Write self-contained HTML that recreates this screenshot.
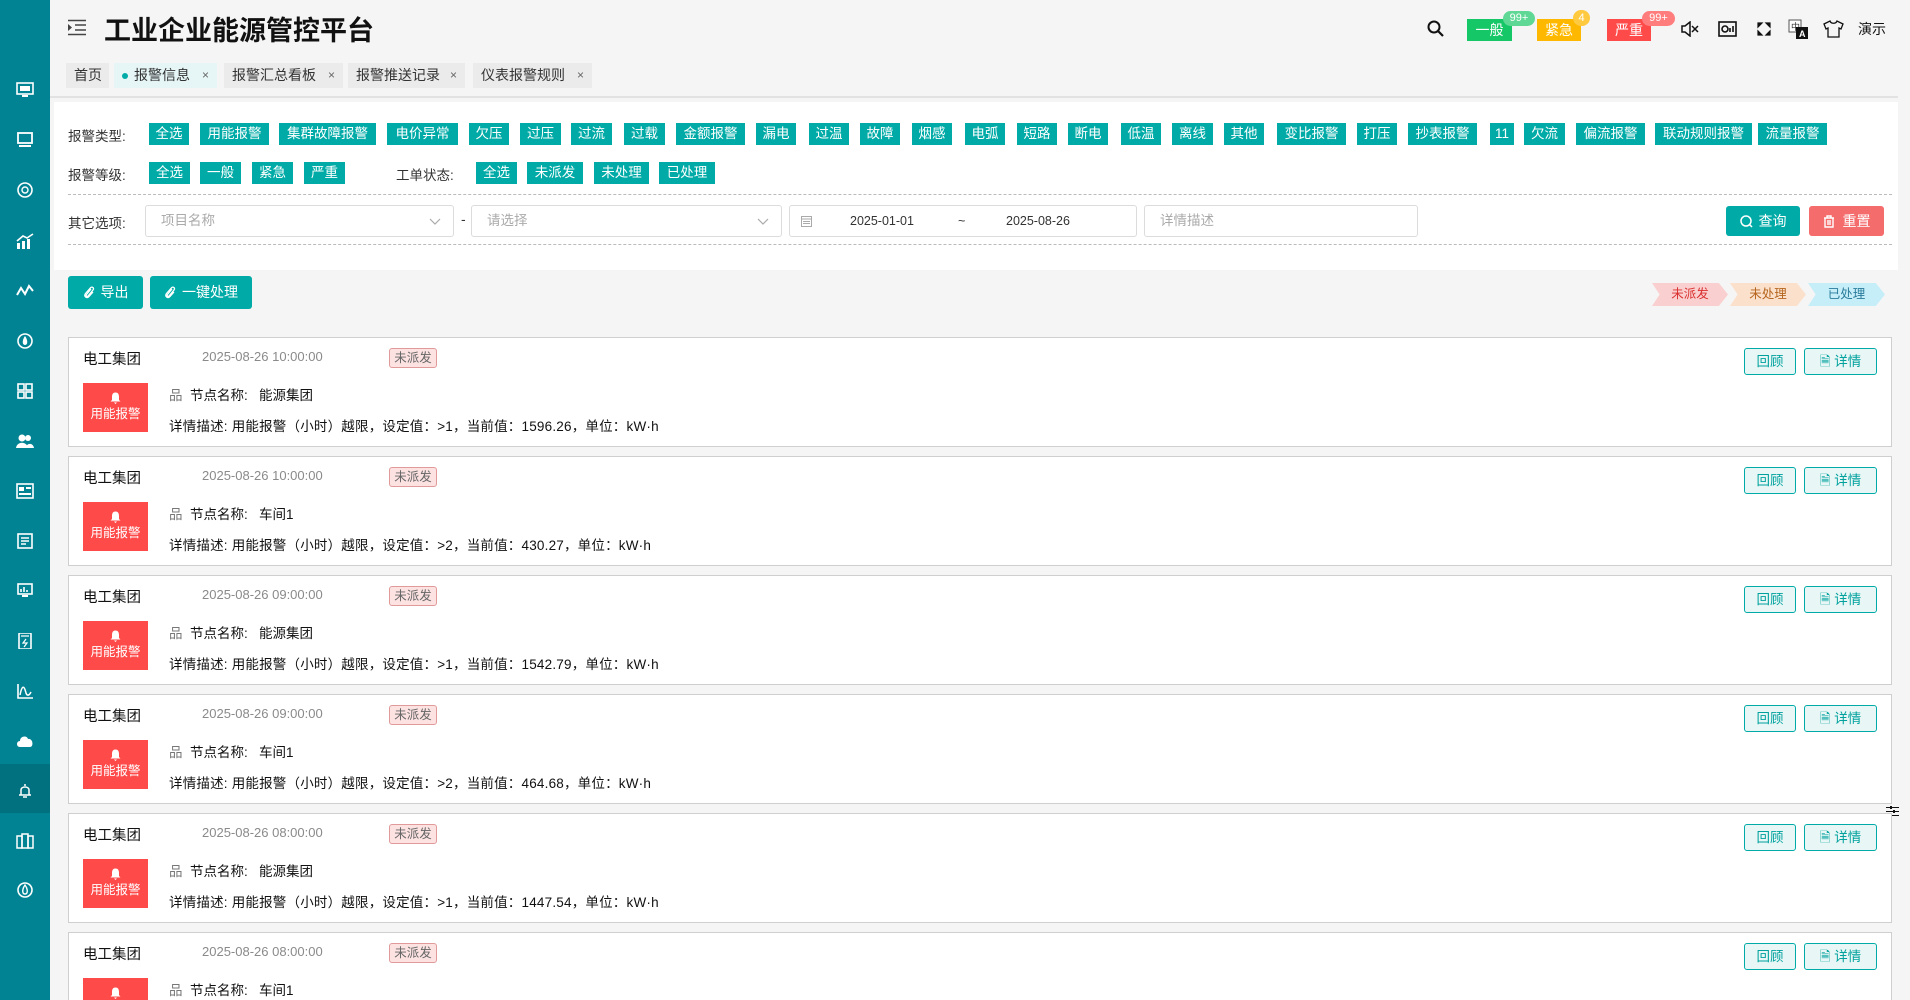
<!DOCTYPE html>
<html style="width:1910px;height:1000px;overflow:hidden"><head><meta charset="utf-8">
<style>
*{margin:0;padding:0;box-sizing:border-box}
body{width:1910px;height:1000px;overflow:hidden;background:#f5f5f5;font-family:"Liberation Sans","Noto Sans CJK SC",sans-serif;font-size:14px;color:#222;position:relative}
.abs{position:absolute}
.side{left:0;top:0;width:50px;height:1000px;background:#028393}
.side .act{position:absolute;left:0;top:764px;width:50px;height:49px;background:#01717f}
.si{position:absolute;left:16px;width:18px;height:16px}
.title{left:104px;top:9px;font-size:27px;font-weight:bold;color:#111}
.tab{top:63px;height:25px;line-height:25px;background:#ebebeb;font-size:14px;color:#333;padding-left:8px}
.tab .x{position:absolute;right:8px;top:0;font-size:12px;color:#666}
.panel{left:54px;top:102px;width:1844px;height:168px;background:#fff}
.lbl{font-size:13.5px;color:#333}
.tg{height:22px;line-height:22px;background:#00aba7;color:#fff;font-size:13.5px;text-align:center;white-space:nowrap}
.dash{left:68px;width:1824px;border-top:1px dashed #bbb;height:0}
.inp{top:205px;height:32px;border:1px solid #dcdcdc;border-radius:3px;background:#fff;color:#aaa;font-size:13.5px;line-height:30px;padding-left:15px}
.btn{color:#fff;font-size:14px;border-radius:3px;text-align:center}
.card{left:68px;width:1824px;height:110px;background:#fff;border:1px solid #cfcfcf;overflow:hidden}
.card .co{position:absolute;left:14px;top:10px;font-size:14.5px;color:#111}
.card .tm{position:absolute;left:133px;top:11px;font-size:13px;color:#8a8a8a}
.card .bd{position:absolute;left:320px;top:10px;width:48px;height:20px;border:1px solid #e09a9a;background:#fde2e2;border-radius:3px;color:#666;font-size:12.5px;line-height:18px;text-align:center}
.card .rb{position:absolute;left:14px;top:45px;width:65px;height:49px;background:#ff4a4a;color:#fff;font-size:12.5px;text-align:center}
.card .rb svg{display:block;margin:9px auto 1px}
.card .l1{position:absolute;left:100px;top:46px;font-size:13.5px;color:#111}
.card .l2{position:absolute;left:100px;top:77px;font-size:13.5px;color:#111;letter-spacing:0.2px}
.card .b1,.card .b2{position:absolute;top:10px;height:27px;border:1px solid #00aba7;background:#e8f7f6;color:#00a19d;border-radius:3px;font-size:13.5px;line-height:25px;text-align:center}
.card .b1{left:1675px;width:52px}
.card .b2{left:1735px;width:73px}
.arrow{top:283px;height:23px;line-height:23px;font-size:12.5px;text-align:center;clip-path:polygon(0 0,88% 0,100% 50%,88% 100%,0 100%,10% 50%)}
</style></head><body>

<div class="abs side">
<div class="act"></div>
<svg class="si" style="top:82px" viewBox="0 0 18 16"><rect x="1" y="1" width="16" height="11" fill="none" stroke="#fff" stroke-width="1.6"/><rect x="4" y="4" width="10" height="5" fill="#fff"/><rect x="6" y="13" width="6" height="2" fill="#fff"/></svg>
<svg class="si" style="top:132px" viewBox="0 0 18 16"><rect x="2" y="1" width="14" height="10" fill="none" stroke="#fff" stroke-width="1.8"/><rect x="3" y="13" width="12" height="2" fill="#fff"/></svg>
<svg class="si" style="top:182px" viewBox="0 0 18 16"><circle cx="9" cy="8" r="7" fill="none" stroke="#fff" stroke-width="1.6"/><circle cx="9" cy="8" r="3" fill="none" stroke="#fff" stroke-width="1.4"/></svg>
<svg class="si" style="top:233px" viewBox="0 0 18 16"><rect x="1" y="10" width="3" height="6" fill="#fff"/><rect x="6" y="8" width="3" height="8" fill="#fff"/><rect x="11" y="6" width="3" height="10" fill="#fff"/><path d="M1 8 L7 3 L11 5 L17 1" stroke="#fff" stroke-width="1.6" fill="none"/></svg>
<svg class="si" style="top:283px" viewBox="0 0 18 16"><path d="M1 12 L5 5 L9 11 L13 3 L17 8" stroke="#fff" stroke-width="2" fill="none"/></svg>
<svg class="si" style="top:333px" viewBox="0 0 18 16"><circle cx="9" cy="8" r="7" fill="none" stroke="#fff" stroke-width="1.6"/><path d="M9 3 C6 7 6 12 9 12 C12 12 12 7 9 3Z" fill="#fff"/></svg>
<svg class="si" style="top:383px" viewBox="0 0 18 16"><rect x="2" y="1" width="6" height="6" fill="none" stroke="#fff" stroke-width="1.6"/><rect x="10" y="1" width="6" height="6" fill="none" stroke="#fff" stroke-width="1.6"/><rect x="2" y="9" width="6" height="6" fill="none" stroke="#fff" stroke-width="1.6"/><rect x="10" y="9" width="6" height="6" fill="none" stroke="#fff" stroke-width="1.6"/></svg>
<svg class="si" style="top:433px" viewBox="0 0 18 16"><circle cx="6" cy="5" r="3.5" fill="#fff"/><circle cx="12" cy="5" r="3" fill="#fff"/><path d="M0 15 C1 8 11 8 12 15Z M10 15 C10 10 17 9 18 15Z" fill="#fff"/></svg>
<svg class="si" style="top:483px" viewBox="0 0 18 16"><rect x="1" y="1" width="16" height="14" fill="none" stroke="#fff" stroke-width="1.6"/><rect x="3" y="4" width="5" height="4" fill="#fff"/><rect x="10" y="4" width="5" height="2" fill="#fff"/><rect x="3" y="10" width="12" height="2" fill="#fff"/></svg>
<svg class="si" style="top:533px" viewBox="0 0 18 16"><rect x="2" y="1" width="14" height="14" fill="none" stroke="#fff" stroke-width="1.6"/><path d="M5 5H13M5 8H13M5 11H10" stroke="#fff" stroke-width="1.4"/></svg>
<svg class="si" style="top:583px" viewBox="0 0 18 16"><rect x="2" y="1" width="14" height="10" fill="none" stroke="#fff" stroke-width="1.6"/><path d="M5 9V6M8 9V4M11 9V7" stroke="#fff" stroke-width="1.6"/><rect x="6" y="12" width="6" height="2" fill="#fff"/></svg>
<svg class="si" style="top:633px" viewBox="0 0 18 16"><rect x="3" y="0" width="12" height="16" rx="1" fill="none" stroke="#fff" stroke-width="1.6"/><path d="M5 3H13M10 6L7 10H11L8 14" stroke="#fff" stroke-width="1.2" fill="none"/></svg>
<svg class="si" style="top:683px" viewBox="0 0 18 16"><path d="M2 1V15H17" stroke="#fff" stroke-width="1.6" fill="none"/><path d="M4 12 C6 2 8 2 10 10 C11 13 13 13 15 9" stroke="#fff" stroke-width="1.5" fill="none"/></svg>
<svg class="si" style="top:733px" viewBox="0 0 18 16"><path d="M4 14 C0 14 0 8 4 8 C4 3 11 2 12 6 C17 5 18 14 14 14Z" fill="#fff"/></svg>
<svg class="si" style="top:783px" viewBox="0 0 18 16"><path d="M5 12 V7 C5 3 13 3 13 7 V12 H15 H3Z M7 14 H11" stroke="#fff" stroke-width="1.5" fill="none"/><path d="M9 1V3" stroke="#fff" stroke-width="1.5"/></svg>
<svg class="si" style="top:833px" viewBox="0 0 18 16"><rect x="1" y="3" width="5" height="12" fill="none" stroke="#fff" stroke-width="1.5"/><rect x="6" y="1" width="6" height="14" fill="none" stroke="#fff" stroke-width="1.5"/><rect x="12" y="3" width="5" height="12" fill="none" stroke="#fff" stroke-width="1.5"/></svg>
<svg class="si" style="top:882px" viewBox="0 0 18 16"><circle cx="9" cy="8" r="7" fill="none" stroke="#fff" stroke-width="1.6"/><path d="M9 3 C6 7 6 12 9 12 C12 12 12 7 9 3Z" fill="none" stroke="#fff" stroke-width="1.4"/></svg>
</div>

<svg class="abs" style="left:67px;top:19px" width="20" height="17" viewBox="0 0 20 17"><path d="M1 1.5H19M8 6H19M8 11H19M1 15.5H19" stroke="#444" stroke-width="1.6"/><path d="M1 5L5 8.5L1 12Z" fill="#444"/></svg>
<div class="abs title">工业企业能源管控平台</div>

<svg class="abs" style="left:1427px;top:20px" width="17" height="17" viewBox="0 0 17 17"><circle cx="7" cy="7" r="5.5" fill="none" stroke="#111" stroke-width="2"/><path d="M11 11L16 16" stroke="#111" stroke-width="2.2"/></svg>
<div class="abs btn" style="left:1467px;top:19px;width:45px;height:22px;line-height:22px;background:#16c768;border-radius:0">一般</div>
<div class="abs" style="left:1503px;top:11px;width:32px;height:15px;line-height:15px;border-radius:8px;background:#5fd896;color:#fff;font-size:11px;text-align:center">99+</div>
<div class="abs btn" style="left:1537px;top:19px;width:44px;height:22px;line-height:22px;background:#ffb800;border-radius:0">紧急</div>
<div class="abs" style="left:1573px;top:10px;width:17px;height:16px;line-height:16px;border-radius:8px;background:#ffc940;color:#fff;font-size:11px;text-align:center">4</div>
<div class="abs btn" style="left:1607px;top:19px;width:44px;height:22px;line-height:22px;background:#ff4a4a;border-radius:0">严重</div>
<div class="abs" style="left:1642px;top:11px;width:33px;height:15px;line-height:15px;border-radius:8px;background:#ff7d7d;color:#fff;font-size:11px;text-align:center">99+</div>
<svg class="abs" style="left:1681px;top:21px" width="18" height="16" viewBox="0 0 18 16"><path d="M1 5H4L9 1V15L4 11H1Z" fill="none" stroke="#111" stroke-width="1.5"/><path d="M11 5L17 11M17 5L11 11" stroke="#111" stroke-width="1.5"/></svg>
<svg class="abs" style="left:1718px;top:21px" width="19" height="16" viewBox="0 0 19 16"><rect x="1" y="1" width="17" height="14" fill="none" stroke="#111" stroke-width="1.6"/><circle cx="7" cy="8" r="3" fill="none" stroke="#111" stroke-width="1.6"/><path d="M12 11V7M15 11V5" stroke="#111" stroke-width="1.6"/></svg>
<svg class="abs" style="left:1757px;top:22px" width="14" height="14" viewBox="0 0 14 14"><path d="M1 1H5L1 5Z M13 1V5L9 1Z M1 13V9L5 13Z M13 13H9L13 9Z" fill="#111" stroke="#111" stroke-width="1.2"/></svg>
<svg class="abs" style="left:1788px;top:19px" width="21" height="21" viewBox="0 0 21 21"><rect x="1" y="1" width="12" height="12" fill="#fff" stroke="#555" stroke-width="1"/><text x="3" y="11" font-size="9" fill="#333" font-family="Noto Sans CJK SC">中</text><rect x="8" y="8" width="12" height="12" fill="#111"/><text x="11" y="18" font-size="9" fill="#fff" font-weight="bold" font-family="Liberation Sans">A</text></svg>
<svg class="abs" style="left:1823px;top:20px" width="21" height="18" viewBox="0 0 21 18"><path d="M7 1 C8 4 13 4 14 1 L20 4 L18 9 L16 8 V17 H5 V8 L3 9 L1 4Z" fill="none" stroke="#111" stroke-width="1.3"/></svg>
<div class="abs" style="left:1858px;top:19px;font-size:14px;color:#111">演示</div>

<div class="abs tab" style="left:66px;width:43px">首页</div>
<div class="abs tab" style="left:114px;width:103px;background:#e6f6f6;padding-left:20px"><span class="abs" style="left:8px;top:10px;width:6px;height:6px;border-radius:3px;background:#00aba7"></span>报警信息<span class="x">×</span></div>
<div class="abs tab" style="left:224px;width:119px">报警汇总看板<span class="x">×</span></div>
<div class="abs tab" style="left:348px;width:117px">报警推送记录<span class="x">×</span></div>
<div class="abs tab" style="left:473px;width:119px">仪表报警规则<span class="x">×</span></div>
<div class="abs" style="left:50px;top:96px;width:1860px;height:2px;background:#e2e2e2"></div>

<div class="abs panel"></div>
<div class="abs lbl" style="left:68px;top:125px">报警类型:</div>
<div class="abs tg" style="left:149px;top:123px;width:40px">全选</div>
<div class="abs tg" style="left:200px;top:123px;width:69px">用能报警</div>
<div class="abs tg" style="left:279px;top:123px;width:97px">集群故障报警</div>
<div class="abs tg" style="left:387px;top:123px;width:71px">电价异常</div>
<div class="abs tg" style="left:469px;top:123px;width:40px">欠压</div>
<div class="abs tg" style="left:520px;top:123px;width:41px">过压</div>
<div class="abs tg" style="left:571px;top:123px;width:41px">过流</div>
<div class="abs tg" style="left:624px;top:123px;width:41px">过载</div>
<div class="abs tg" style="left:676px;top:123px;width:69px">金额报警</div>
<div class="abs tg" style="left:756px;top:123px;width:40px">漏电</div>
<div class="abs tg" style="left:809px;top:123px;width:40px">过温</div>
<div class="abs tg" style="left:860px;top:123px;width:40px">故障</div>
<div class="abs tg" style="left:912px;top:123px;width:40px">烟感</div>
<div class="abs tg" style="left:965px;top:123px;width:40px">电弧</div>
<div class="abs tg" style="left:1017px;top:123px;width:40px">短路</div>
<div class="abs tg" style="left:1068px;top:123px;width:40px">断电</div>
<div class="abs tg" style="left:1121px;top:123px;width:40px">低温</div>
<div class="abs tg" style="left:1172px;top:123px;width:41px">离线</div>
<div class="abs tg" style="left:1224px;top:123px;width:40px">其他</div>
<div class="abs tg" style="left:1277px;top:123px;width:69px">变比报警</div>
<div class="abs tg" style="left:1357px;top:123px;width:40px">打压</div>
<div class="abs tg" style="left:1408px;top:123px;width:69px">抄表报警</div>
<div class="abs tg" style="left:1490px;top:123px;width:24px">11</div>
<div class="abs tg" style="left:1524px;top:123px;width:41px">欠流</div>
<div class="abs tg" style="left:1576px;top:123px;width:69px">偏流报警</div>
<div class="abs tg" style="left:1655px;top:123px;width:97px">联动规则报警</div>
<div class="abs tg" style="left:1758px;top:123px;width:69px">流量报警</div>

<div class="abs lbl" style="left:68px;top:164px">报警等级:</div>
<div class="abs tg" style="left:149px;top:162px;width:41px">全选</div>
<div class="abs tg" style="left:200px;top:162px;width:41px">一般</div>
<div class="abs tg" style="left:252px;top:162px;width:41px">紧急</div>
<div class="abs tg" style="left:304px;top:162px;width:41px">严重</div>
<div class="abs lbl" style="left:396px;top:164px">工单状态:</div>
<div class="abs tg" style="left:476px;top:162px;width:41px">全选</div>
<div class="abs tg" style="left:527px;top:162px;width:56px">未派发</div>
<div class="abs tg" style="left:594px;top:162px;width:55px">未处理</div>
<div class="abs tg" style="left:659px;top:162px;width:56px">已处理</div>

<div class="abs dash" style="top:194px"></div>
<div class="abs dash" style="top:244px"></div>
<div class="abs lbl" style="left:68px;top:212px">其它选项:</div>
<div class="abs inp" style="left:145px;width:309px">项目名称<svg class="abs" style="right:12px;top:12px" width="12" height="7" viewBox="0 0 12 7"><path d="M1 1L6 6L11 1" stroke="#aaa" fill="none" stroke-width="1.2"/></svg></div>
<div class="abs" style="left:461px;top:211px;color:#333">-</div>
<div class="abs inp" style="left:471px;width:311px">请选择<svg class="abs" style="right:12px;top:12px" width="12" height="7" viewBox="0 0 12 7"><path d="M1 1L6 6L11 1" stroke="#aaa" fill="none" stroke-width="1.2"/></svg></div>
<div class="abs inp" style="left:789px;width:348px;color:#333;font-size:12.5px"><svg class="abs" style="left:11px;top:9px" width="11" height="12" viewBox="0 0 11 12"><rect x="0.5" y="1.5" width="10" height="10" fill="none" stroke="#aaa"/><path d="M0.5 4H10.5M2 6.5H9M2 8.5H9" stroke="#aaa"/></svg><span class="abs" style="left:60px">2025-01-01</span><span class="abs" style="left:168px">~</span><span class="abs" style="left:216px">2025-08-26</span></div>
<div class="abs inp" style="left:1144px;width:274px">详情描述</div>
<div class="abs btn" style="left:1726px;top:206px;width:74px;height:30px;line-height:30px;background:#00aba7"><svg style="vertical-align:-2px;margin-right:6px" width="13" height="13" viewBox="0 0 13 13"><circle cx="6" cy="6" r="5" fill="none" stroke="#fff" stroke-width="1.5"/><path d="M9.5 9.5L12 12" stroke="#fff" stroke-width="1.5"/></svg>查询</div>
<div class="abs btn" style="left:1809px;top:206px;width:75px;height:30px;line-height:30px;background:#f56c6c"><svg style="vertical-align:-2px;margin-right:8px" width="12" height="13" viewBox="0 0 12 13"><path d="M1 3H11M4 3V1H8V3M2 3V12H10V3M5 5V10M7 5V10" fill="none" stroke="#fff" stroke-width="1.4"/></svg>重置</div>

<div class="abs btn" style="left:68px;top:276px;width:75px;height:33px;line-height:33px;background:#00aba7"><svg style="vertical-align:-2px;margin-right:6px" width="12" height="13" viewBox="0 0 12 13"><path d="M8 3 L3.5 8.5 C2.5 9.8 4 11 5 10 L10 4 C11.5 2 9 0 7.5 1.8 L2.5 7.5 C0.5 10 3.5 13 5.7 10.8 L10 6" fill="none" stroke="#fff" stroke-width="1.3"/></svg>导出</div>
<div class="abs btn" style="left:150px;top:276px;width:102px;height:33px;line-height:33px;background:#00aba7"><svg style="vertical-align:-2px;margin-right:6px" width="12" height="13" viewBox="0 0 12 13"><path d="M8 3 L3.5 8.5 C2.5 9.8 4 11 5 10 L10 4 C11.5 2 9 0 7.5 1.8 L2.5 7.5 C0.5 10 3.5 13 5.7 10.8 L10 6" fill="none" stroke="#fff" stroke-width="1.3"/></svg>一键处理</div>

<div class="abs arrow" style="left:1652px;width:76px;background:#f9d0cf;color:#d9302f">未派发</div>
<div class="abs arrow" style="left:1730px;width:76px;background:#fbe0cc;color:#b5651d">未处理</div>
<div class="abs arrow" style="left:1808px;width:77px;background:#c6eef8;color:#2a7c9c">已处理</div>

<div class="abs" style="left:1898px;top:0;width:12px;height:1000px;background:#f5f5f5"></div>
<svg class="abs" style="left:1886px;top:806px" width="13" height="11" viewBox="0 0 13 11"><path d="M0 1.5H13M0 5.5H13M0 9.5H13" stroke="#111" stroke-width="1"/><rect x="4" y="0" width="2" height="3" fill="#111"/><rect x="7" y="4" width="2" height="3" fill="#111"/><rect x="4" y="8" width="2" height="3" fill="#111"/></svg>

<div class="abs card" style="top:337px"><div class="co">电工集团</div><div class="tm">2025-08-26 10:00:00</div><div class="bd">未派发</div><div class="rb"><svg width="11" height="12" viewBox="0 0 11 12"><path d="M5.5 0.5 C2.5 0.5 2 3 2 5 V8 L0.5 9.5 H10.5 L9 8 V5 C9 3 8.5 0.5 5.5 0.5Z M4 10.5 H7 L5.5 12Z" fill="#fff"/></svg><div style="line-height:18px">用能报警</div></div><div class="l1"><span style="color:#777">品</span>&nbsp; 节点名称:&nbsp;&nbsp; 能源集团</div><div class="l2">详情描述: 用能报警（小时）越限，设定值：&gt;1，当前值：1596.26，单位：kW·h</div><div class="b1">回顾</div><div class="b2">🗎 详情</div></div>
<div class="abs card" style="top:456px"><div class="co">电工集团</div><div class="tm">2025-08-26 10:00:00</div><div class="bd">未派发</div><div class="rb"><svg width="11" height="12" viewBox="0 0 11 12"><path d="M5.5 0.5 C2.5 0.5 2 3 2 5 V8 L0.5 9.5 H10.5 L9 8 V5 C9 3 8.5 0.5 5.5 0.5Z M4 10.5 H7 L5.5 12Z" fill="#fff"/></svg><div style="line-height:18px">用能报警</div></div><div class="l1"><span style="color:#777">品</span>&nbsp; 节点名称:&nbsp;&nbsp; 车间1</div><div class="l2">详情描述: 用能报警（小时）越限，设定值：&gt;2，当前值：430.27，单位：kW·h</div><div class="b1">回顾</div><div class="b2">🗎 详情</div></div>
<div class="abs card" style="top:575px"><div class="co">电工集团</div><div class="tm">2025-08-26 09:00:00</div><div class="bd">未派发</div><div class="rb"><svg width="11" height="12" viewBox="0 0 11 12"><path d="M5.5 0.5 C2.5 0.5 2 3 2 5 V8 L0.5 9.5 H10.5 L9 8 V5 C9 3 8.5 0.5 5.5 0.5Z M4 10.5 H7 L5.5 12Z" fill="#fff"/></svg><div style="line-height:18px">用能报警</div></div><div class="l1"><span style="color:#777">品</span>&nbsp; 节点名称:&nbsp;&nbsp; 能源集团</div><div class="l2">详情描述: 用能报警（小时）越限，设定值：&gt;1，当前值：1542.79，单位：kW·h</div><div class="b1">回顾</div><div class="b2">🗎 详情</div></div>
<div class="abs card" style="top:694px"><div class="co">电工集团</div><div class="tm">2025-08-26 09:00:00</div><div class="bd">未派发</div><div class="rb"><svg width="11" height="12" viewBox="0 0 11 12"><path d="M5.5 0.5 C2.5 0.5 2 3 2 5 V8 L0.5 9.5 H10.5 L9 8 V5 C9 3 8.5 0.5 5.5 0.5Z M4 10.5 H7 L5.5 12Z" fill="#fff"/></svg><div style="line-height:18px">用能报警</div></div><div class="l1"><span style="color:#777">品</span>&nbsp; 节点名称:&nbsp;&nbsp; 车间1</div><div class="l2">详情描述: 用能报警（小时）越限，设定值：&gt;2，当前值：464.68，单位：kW·h</div><div class="b1">回顾</div><div class="b2">🗎 详情</div></div>
<div class="abs card" style="top:813px"><div class="co">电工集团</div><div class="tm">2025-08-26 08:00:00</div><div class="bd">未派发</div><div class="rb"><svg width="11" height="12" viewBox="0 0 11 12"><path d="M5.5 0.5 C2.5 0.5 2 3 2 5 V8 L0.5 9.5 H10.5 L9 8 V5 C9 3 8.5 0.5 5.5 0.5Z M4 10.5 H7 L5.5 12Z" fill="#fff"/></svg><div style="line-height:18px">用能报警</div></div><div class="l1"><span style="color:#777">品</span>&nbsp; 节点名称:&nbsp;&nbsp; 能源集团</div><div class="l2">详情描述: 用能报警（小时）越限，设定值：&gt;1，当前值：1447.54，单位：kW·h</div><div class="b1">回顾</div><div class="b2">🗎 详情</div></div>
<div class="abs card" style="top:932px;height:68px;border-bottom:none"><div class="co">电工集团</div><div class="tm">2025-08-26 08:00:00</div><div class="bd">未派发</div><div class="rb"><svg width="11" height="12" viewBox="0 0 11 12"><path d="M5.5 0.5 C2.5 0.5 2 3 2 5 V8 L0.5 9.5 H10.5 L9 8 V5 C9 3 8.5 0.5 5.5 0.5Z M4 10.5 H7 L5.5 12Z" fill="#fff"/></svg><div style="line-height:18px">用能报警</div></div><div class="l1"><span style="color:#777">品</span>&nbsp; 节点名称:&nbsp;&nbsp; 车间1</div><div class="b1">回顾</div><div class="b2">🗎 详情</div></div>
</body></html>
